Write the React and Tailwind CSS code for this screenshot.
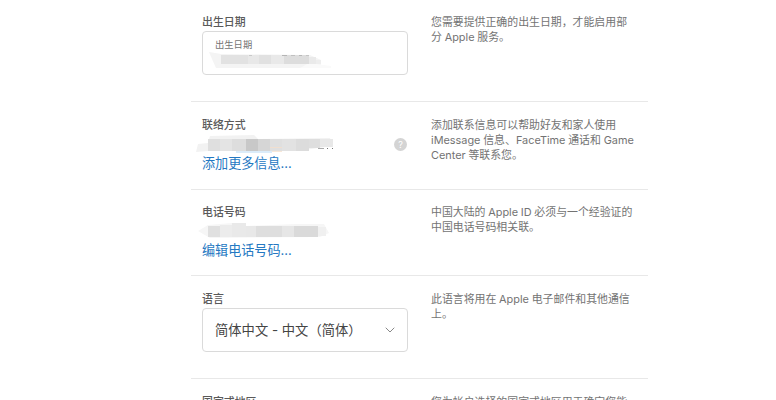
import React from 'react';

const Mosaic = ({ shapes, blocks, className }) => (
  <svg className={`block ${className}`} width="150" height="22" viewBox="0 0 150 22" aria-hidden="true">
    {shapes.map(([points, fill]) => (
      <polygon key={points} points={points} fill={fill} />
    ))}
    {blocks.map(([x, y, w, h, fill], i) => (
      <rect key={i} x={x} y={y} width={w} height={h} fill={fill} shapeRendering="crispEdges" />
    ))}
  </svg>
);

// soft outline under the blocks: [points, fill]
const birthdayShapes = [
  ['9,1 21,3 110,4 121,9 121,14 108,17 16,17 12,8', '#f4f4f4'],
  ['109,12 131,15 131,17 100,17', '#fafafa'],
];

// [x, y, width, height, fill]
const birthdayBlocks = [
  [21, 4, 27, 9, '#e2e2e2'],
  [48, 4, 11, 9, '#e8e8e8'],
  [59, 4, 12, 9, '#e1e1e1'],
  [71, 4, 13, 9, '#e9e9e9'],
  [84, 4, 25, 9, '#dddddd'],
  [109, 6, 7, 7, '#eaeaea'],
  [116, 9, 5, 4, '#eeeeee'],
  [49, 4, 3, 1, '#c9c9c9'],
  [82, 4, 5, 1, '#b5b5b5'],
  [91, 4, 4, 1, '#c0c0c0'],
  [99, 4, 3, 1, '#b8b8b8'],
  [106, 4, 3, 1, '#c4c4c4'],
];

const contactShapes = [
  ['20,1 64,0 68,4 140,3 143,11 128,13 108,16 18,16 6,17 8,9 18,8', '#f2f2f2'],
];

const contactBlocks = [
  [18, 4, 12, 12, '#dfdfdf'],
  [30, 4, 12, 12, '#e4e4e4'],
  [42, 4, 14, 12, '#dddddd'],
  [56, 4, 12, 12, '#c8c8c8'],
  [68, 4, 12, 12, '#d6d6d6'],
  [80, 4, 12, 12, '#dfdfdf'],
  [92, 4, 14, 12, '#e2e2e2'],
  [106, 4, 13, 12, '#dcdcdc'],
  [119, 4, 11, 9, '#dedede'],
  [130, 4, 13, 8, '#e8e8e8'],
  [80, 12, 12, 1, '#f0dfd0'],
  [46, 16, 36, 2, '#dcecf9'],
  [82, 16, 10, 1, '#f8e8d8'],
  [128, 13, 6, 1, '#aaaaaa'],
  [137, 13, 1, 1, '#777777'],
  [142, 13, 1, 1, '#777777'],
];

const phoneShapes = [
  ['8,9 18,3 42,1 56,1 56,4 106,2 134,2 139,11 130,15 20,16', '#f6f6f6'],
];

const phoneBlocks = [
  [18, 4, 12, 11, '#e0e0e0'],
  [30, 3, 12, 12, '#ececec'],
  [42, 1, 14, 14, '#e9e9e9'],
  [56, 4, 10, 11, '#e8e8e8'],
  [66, 4, 26, 11, '#dedede'],
  [92, 4, 12, 11, '#e6e6e6'],
  [104, 4, 24, 11, '#dadada'],
  [128, 5, 8, 9, '#f0f0f0'],
];

const Section = ({ title, lines, className = '', children }) => (
  <section className={`flex border-b border-[#e8e8e8] pl-[11px] ${className}`}>
    <div className="w-[206px] shrink-0">
      <h3 className="text-[10.9px] leading-[15px] font-medium text-[#5a5a5a]">{title}</h3>
      {children}
    </div>
    <p className="ml-[23px] text-[10.9px] leading-[15px] [word-spacing:-0.3px] whitespace-nowrap text-[#737373]">
      {lines.map((line) => (
        <span key={line} className="block">{line}</span>
      ))}
    </p>
  </section>
);

const App = () => {
  return (
    <main className="h-[400px] w-full overflow-hidden bg-white font-['Inter','Noto_Sans_CJK_SC',sans-serif]">
      <div className="ml-[191px] w-[457px]">
        <Section title="出生日期" lines={['您需要提供正确的出生日期，才能启用部', '分 Apple 服务。']} className="h-[102px] pt-[15px]">
          <div className="mt-px h-[44px] rounded-[4px] border border-[#dadada] pt-[7px]">
            <div className="pl-[12px] text-[9.3px] leading-[12px] text-[#747474]">出生日期</div>
            <Mosaic shapes={birthdayShapes} blocks={birthdayBlocks} className="-ml-[3px]" />
          </div>
        </Section>

        <Section title="联络方式" lines={['添加联系信息可以帮助好友和家人使用', 'iMessage 信息、FaceTime 通话和 Game', 'Center 等联系您。']} className="h-[88px] pt-[16px]">
          <div className="flex h-[20px] items-start justify-between pt-[2px]">
            <Mosaic shapes={contactShapes} blocks={contactBlocks} className="-ml-[12px]" />
            <span className="mt-[3px] mr-[1px] flex h-[13px] w-[13px] shrink-0 items-center justify-center rounded-full bg-[#d4d4d4] text-[9px] leading-none text-white">?</span>
          </div>
          <a href="#" className="block text-[13.1px] leading-[20px] text-[#2478c2]">添加更多信息...</a>
        </Section>

        <Section title="电话号码" lines={['中国大陆的 Apple ID 必须与一个经验证的', '中国电话号码相关联。']} className="h-[86px] pt-[15px]">
          <div className="h-[20px] pt-[2px]">
            <Mosaic shapes={phoneShapes} blocks={phoneBlocks} className="-ml-[12px]" />
          </div>
          <a href="#" className="block text-[13.1px] leading-[20px] text-[#2478c2]">编辑电话号码...</a>
        </Section>

        <Section title="语言" lines={['此语言将用在 Apple 电子邮件和其他通信', '上。']} className="h-[103px] pt-[16px]">
          <button type="button" className="mt-px flex h-[44px] w-full items-center justify-between rounded-[4px] border border-[#dadada] pr-[12px] pl-[12px] text-[13.3px] text-[#444]">
            <span className="pt-px">简体中文 - 中文（简体）</span>
            <svg width="10" height="6" viewBox="0 0 10 6" fill="none" stroke="#888" strokeWidth="1" strokeLinecap="round" strokeLinejoin="round">
              <path d="M1 1l4 4 4-4" />
            </svg>
          </button>
        </Section>

        <Section title="国家或地区" lines={['您为帐户选择的国家或地区用于确定您能']} className="h-[60px] pt-[16px]" />
      </div>
    </main>
  );
};

export default App;
